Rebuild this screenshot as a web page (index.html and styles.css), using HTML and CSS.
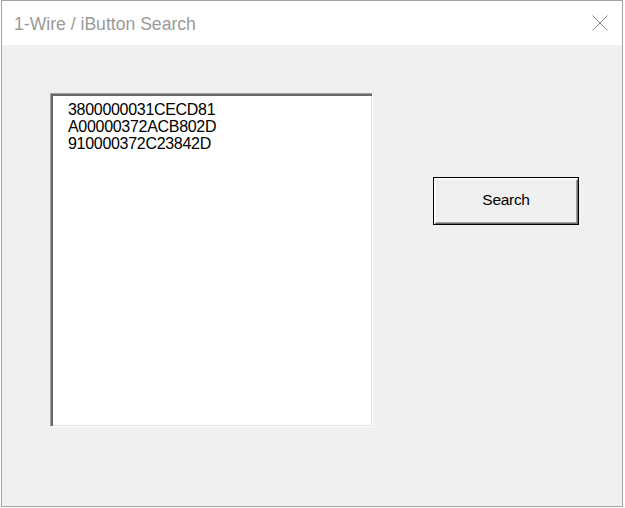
FILE: index.html
```html
<!DOCTYPE html>
<html>
<head>
<meta charset="utf-8">
<link rel="stylesheet" href="styles.css">
</head>
<body>
<div class="window">
  <div class="titlebar">
    <span class="title">1-Wire / iButton Search</span>
    <svg class="close" width="16" height="16" viewBox="0 0 16 16"><path d="M0.5 0.5 L15.5 15.5 M15.5 0.5 L0.5 15.5" stroke="#8a8a8a" stroke-width="1" fill="none"/></svg>
  </div>
  <div class="main">
    <div class="listbox">
      <div class="item">3800000031CECD81</div>
      <div class="item">A00000372ACB802D</div>
      <div class="item">910000372C23842D</div>
    </div>
    <button class="btn">Search</button>
  </div>
</div>
</body>
</html>
```
FILE: styles.css
```css
html, body {
  margin: 0;
  padding: 0;
  background: #ffffff;
}
body {
  width: 625px;
  height: 508px;
  overflow: hidden;
  font-family: "Liberation Sans", Arial, sans-serif;
}
.window {
  margin-left: 1px;
  width: 622px;
  height: 507px;
  box-sizing: border-box;
  border: 1px solid #a3a3a3;
  background: #f0f0f0;
  display: flex;
  flex-direction: column;
}
.titlebar {
  height: 44px;
  background: #ffffff;
  display: flex;
  align-items: center;
  justify-content: space-between;
  padding: 2px 14px 0 12px;
  box-sizing: border-box;
}
.title {
  font-size: 17.6px;
  color: #9a9a9a;
}
.close {
  display: block;
  margin-top: -2px;
}
.main {
  display: flex;
  align-items: flex-start;
  padding: 48px 0 0 48px;
}
.listbox {
  width: 323px;
  height: 334px;
  box-sizing: border-box;
  background: #ffffff;
  border: 1px solid;
  border-color: #a0a0a0 #ffffff #ffffff #a0a0a0;
  box-shadow: inset 2px 2px 0 #696969, inset -1px -1px 0 #e3e3e3;
  padding: 7px 0 0 17px;
}
.item {
  font-size: 16px;
  letter-spacing: -0.3px;
  line-height: 17px;
  color: #000;
}
.btn {
  margin: 84px 0 0 60px;
  width: 146px;
  height: 48px;
  box-sizing: border-box;
  border: 1px solid #000;
  background: #f0f0f0;
  box-shadow: inset 1px 1px 0 #ffffff, inset -1px -1px 0 #696969, inset 2px 2px 0 #f8f8f8, inset -2px -2px 0 #a0a0a0;
  font-family: "Liberation Sans", Arial, sans-serif;
  font-size: 15.5px;
  letter-spacing: -0.3px;
  color: #000;
  padding: 0 0 2px 0;
}
```
